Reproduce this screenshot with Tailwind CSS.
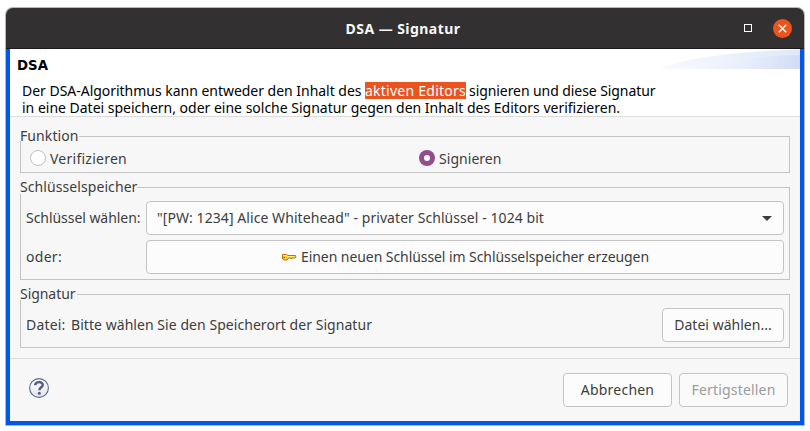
<!DOCTYPE html>
<html lang="de">
<head>
<meta charset="utf-8">
<title>DSA — Signatur</title>
<script src="https://cdn.jsdelivr.net/npm/@tailwindcss/browser@4"></script>
</head>
<body class="w-[810px] h-[431px] overflow-hidden bg-white pl-[5px] pt-[7px] font-['Noto_Sans',sans-serif] text-[14px] text-[#3d3d3d] whitespace-nowrap">
<div class="w-[800px] h-[419px] flex flex-col rounded-t-[8px] bg-[#b9b6b3] p-px">
  <header class="h-[41px] shrink-0 flex items-center rounded-t-[7px] bg-[#333031] border-b border-[#1c1a1b] text-white">
    <div class="w-[120px]"></div>
    <h1 class="flex-1 text-center font-bold tracking-[0.45px] text-[#f8f8f8] pr-[4px] pt-px">DSA — Signatur</h1>
    <div class="w-[120px] flex items-center justify-end gap-[21px] pr-[12px]">
      <button class="size-2 border border-white" aria-label="Maximieren"></button>
      <button class="size-[19px] rounded-full bg-[#e95420] flex items-center justify-center" aria-label="Schließen">
        <svg class="size-[9px]" viewBox="0 0 9 9" fill="none" stroke="#fff" stroke-width="1.4"><path d="M.8.8l7.4 7.4M8.2.8L.8 8.2"/></svg>
      </button>
    </div>
  </header>
  <div class="flex-1 flex flex-col bg-[#f7f7f7] border-x-4 border-b-4 border-[#0058ea]">
    <section class="h-[68px] shrink-0 flex bg-white border-b border-[#dcdcdc] text-black">
      <div class="w-[650px] pl-[7px]">
        <h2 class="font-['DejaVu_Sans',sans-serif] font-bold text-[13.33px] leading-[17px] mt-[8px]">DSA</h2>
        <div class="pl-[5px] pt-[8px] leading-[17px]">
          <div class="flex h-[17px]"><span class="tracking-[-0.024px] w-[343px]">Der DSA-Algorithmus kann entweder den Inhalt des</span><span class="w-[101px] bg-[#e95420] text-white tracking-[0.246px]">aktiven Editors</span><span class="pl-[3px] tracking-[-0.075px]">signieren und diese Signatur</span></div>
          <div class="h-[17px] tracking-[-0.007px]">in eine Datei speichern, oder eine solche Signatur gegen den Inhalt des Editors verifizieren.</div>
        </div>
      </div>
      <svg class="w-[140px] h-5" viewBox="0 0 140 20">
        <defs>
          <linearGradient id="a"><stop offset="0" stop-color="#f8fafe"/><stop offset="1" stop-color="#dfe8f8"/></linearGradient>
          <linearGradient id="b"><stop offset="0" stop-color="#fafbff"/><stop offset=".55" stop-color="#e9eefb"/><stop offset="1" stop-color="#d2dcf5"/></linearGradient>
        </defs>
        <path d="M0 20C22 9 78 2 140 .5V20z" fill="url(#a)"/>
        <path d="M16 20C40 14 90 7 140 6V20z" fill="url(#b)"/>
      </svg>
    </section>
    <main class="flex-1 flex flex-col pl-[10px] pr-[10px] pt-[14px]">
      <fieldset class="h-[42px] shrink-0 border border-[#c3c3c3]">
        <legend class="-ml-px h-[10px] leading-[10px] tracking-[0.083px]">Funktion</legend>
        <div class="flex h-[31px] items-center pl-[9px] pt-[3px]">
          <label class="flex w-[389px] items-center gap-[4px]"><span class="size-4 rounded-full border border-[#c1c1c1] bg-white"></span><span class="leading-[18px] pt-px tracking-[0.252px]">Verifizieren</span></label>
          <label class="flex items-center gap-[4px]"><span class="size-4 rounded-full bg-[#924d8b] flex items-center justify-center"><span class="size-[6px] rounded-full bg-white"></span></span><span class="leading-[18px] pt-px tracking-[0.042px]">Signieren</span></label>
        </div>
      </fieldset>
      <fieldset class="mt-[7px] h-[100px] shrink-0 border border-[#c3c3c3]">
        <legend class="-ml-px h-[14px] leading-[14px] tracking-[0.08px]">Schlüsselspeicher</legend>
        <div class="grid grid-cols-[120px_638px] gap-y-[5px] pl-[5px] pt-[7px]">
          <span class="self-center pb-[2px] tracking-[-0.047px]">Schlüssel wählen:</span>
          <button class="h-[34px] rounded-[4px] border border-[#c3c3c3] bg-[#fcfcfc] flex items-center justify-between pl-[10px] pr-[11px]"><span class="pb-[2px] tracking-[0.067px]">"[PW: 1234] Alice Whitehead" - privater Schlüssel - 1024 bit</span><svg class="w-[10px] h-[5px]" viewBox="0 0 10 5"><path d="M0 0h10L5 5z" fill="#3d3d3d"/></svg></button>
          <span class="self-center pb-[2px] tracking-[0.298px]">oder:</span>
          <button class="h-[34px] rounded-[4px] border border-[#c3c3c3] bg-[#fcfcfc] flex items-center pl-[134px] gap-[4px]">
            <svg class="w-4 h-4" viewBox="0 0 16 16"><path d="M1.500 5.500h4l1.500 1h7.500l.5 1.500-1.500 1h-2.500l-1 .8-1-.8H7.500L6 11H3L1.500 10z" fill="#fccf1c" stroke="#b8741c" stroke-width="1" stroke-linejoin="round"/><path d="M2.500 6.500h3l1 1h7" stroke="#fff27a" fill="none"/><path d="M2.500 8.500h1.500" stroke="#8f5510"/></svg>
            <span class="pb-[2px] tracking-[-0.07px]">Einen neuen Schlüssel im Schlüsselspeicher erzeugen</span>
          </button>
        </div>
      </fieldset>
      <fieldset class="mt-[8px] h-[60px] shrink-0 border border-[#c3c3c3]">
        <legend class="-ml-px h-[12px] leading-[12px] pr-px tracking-[-0.05px]">Signatur</legend>
        <div class="flex items-center pl-[5px] pr-[5px] pt-[8px]">
          <span class="w-[45px] pb-[2px] tracking-[0.185px]">Datei:</span>
          <span class="flex-1 pb-[2px] tracking-[0.052px]">Bitte wählen Sie den Speicherort der Signatur</span>
          <button class="w-[122px] h-[34px] rounded-[4px] border border-[#c3c3c3] bg-[#fcfcfc] pb-[2px] tracking-[0.02px]">Datei wählen...</button>
        </div>
      </fieldset>
    </main>
    <footer class="h-[63px] shrink-0 border-t border-[#dcdcdc] flex items-start pl-[19px] pr-[12px] pt-[14px]">
      <svg class="size-5 mt-[5px]" viewBox="0 0 20 20"><defs><linearGradient id="h" x2="0" y2="1"><stop offset="0" stop-color="#fff"/><stop offset="1" stop-color="#e3e5ea"/></linearGradient></defs><circle cx="10" cy="10" r="9.400" fill="url(#h)" stroke="#5a6a8c" stroke-width="1.100"/><path d="M6.200 7.200C6.300 3.200 13.600 3.100 13.700 6.900c0 2.300-3.300 2.600-3.300 5.300" fill="none" stroke="#4f6085" stroke-width="2.500"/><circle cx="10.300" cy="15.200" r="1.500" fill="#4f6085"/></svg>
      <div class="flex-1"></div>
      <div class="flex gap-[7px]">
        <button class="w-[109px] h-[34px] rounded-[4px] border border-[#c3c3c3] bg-[#fcfcfc] pb-[2px] tracking-[0.224px]">Abbrechen</button>
        <button class="w-[109px] h-[34px] rounded-[4px] border border-[#c3c3c3] bg-[#fafafa] text-[#9b9b9b] pb-[2px] tracking-[0.181px]" disabled>Fertigstellen</button>
      </div>
    </footer>
  </div>
</div>
</body>
</html>
